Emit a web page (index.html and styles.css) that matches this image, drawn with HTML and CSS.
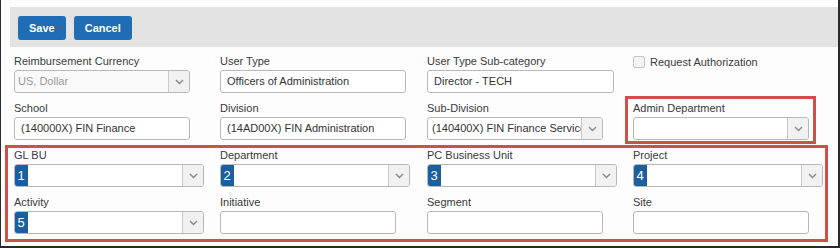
FILE: index.html
```html
<!DOCTYPE html>
<html>
<head>
<meta charset="utf-8">
<link rel="stylesheet" href="styles.css">
</head>
<body>
<div class="frame">
  <div class="toolbar">
    <button class="btn">Save</button>
    <button class="btn">Cancel</button>
  </div>
  <div class="form">
    <div class="grid">
      <div class="field">
        <label class="lbl">Reimbursement Currency</label>
        <div class="select disabled w176"><span class="val">US, Dollar</span><span class="arrow"><svg width="9" height="6" viewBox="0 0 9 6"><polyline points="1,1 4.5,4.5 8,1" fill="none" stroke="#888" stroke-width="1.4"/></svg></span></div>
      </div>
      <div class="field">
        <label class="lbl">User Type</label>
        <div class="input w186">Officers of Administration</div>
      </div>
      <div class="field">
        <label class="lbl">User Type Sub-category</label>
        <div class="input w187">Director - TECH</div>
      </div>
      <div class="field check">
        <span class="box"></span><span class="clbl">Request Authorization</span>
      </div>

      <div class="field">
        <label class="lbl">School</label>
        <div class="input w176">(140000X) FIN Finance</div>
      </div>
      <div class="field">
        <label class="lbl">Division</label>
        <div class="input w186">(14AD00X) FIN Administration</div>
      </div>
      <div class="field">
        <label class="lbl">Sub-Division</label>
        <div class="select w176"><span class="val clip">(140400X) FIN Finance Services</span><span class="arrow"><svg width="9" height="6" viewBox="0 0 9 6"><polyline points="1,1 4.5,4.5 8,1" fill="none" stroke="#888" stroke-width="1.4"/></svg></span></div>
      </div>
      <div class="field">
        <label class="lbl">Admin Department</label>
        <div class="select w176"><span class="val"></span><span class="arrow"><svg width="9" height="6" viewBox="0 0 9 6"><polyline points="1,1 4.5,4.5 8,1" fill="none" stroke="#888" stroke-width="1.4"/></svg></span></div>
      </div>

      <div class="field">
        <label class="lbl">GL BU</label>
        <div class="select w190"><span class="badge">1</span><span class="val"></span><span class="arrow"><svg width="9" height="6" viewBox="0 0 9 6"><polyline points="1,1 4.5,4.5 8,1" fill="none" stroke="#888" stroke-width="1.4"/></svg></span></div>
      </div>
      <div class="field">
        <label class="lbl">Department</label>
        <div class="select w190"><span class="badge">2</span><span class="val"></span><span class="arrow"><svg width="9" height="6" viewBox="0 0 9 6"><polyline points="1,1 4.5,4.5 8,1" fill="none" stroke="#888" stroke-width="1.4"/></svg></span></div>
      </div>
      <div class="field">
        <label class="lbl">PC Business Unit</label>
        <div class="select w190"><span class="badge">3</span><span class="val"></span><span class="arrow"><svg width="9" height="6" viewBox="0 0 9 6"><polyline points="1,1 4.5,4.5 8,1" fill="none" stroke="#888" stroke-width="1.4"/></svg></span></div>
      </div>
      <div class="field">
        <label class="lbl">Project</label>
        <div class="select w190"><span class="badge">4</span><span class="val"></span><span class="arrow"><svg width="9" height="6" viewBox="0 0 9 6"><polyline points="1,1 4.5,4.5 8,1" fill="none" stroke="#888" stroke-width="1.4"/></svg></span></div>
      </div>

      <div class="field">
        <label class="lbl">Activity</label>
        <div class="select w190"><span class="badge">5</span><span class="val"></span><span class="arrow"><svg width="9" height="6" viewBox="0 0 9 6"><polyline points="1,1 4.5,4.5 8,1" fill="none" stroke="#888" stroke-width="1.4"/></svg></span></div>
      </div>
      <div class="field">
        <label class="lbl">Initiative</label>
        <div class="input w176"></div>
      </div>
      <div class="field">
        <label class="lbl">Segment</label>
        <div class="input w176"></div>
      </div>
      <div class="field">
        <label class="lbl">Site</label>
        <div class="input w176"></div>
      </div>
    </div>
    <div class="hl hl-admin"></div>
    <div class="hl hl-segs"></div>
  </div>
</div>
</body>
</html>
```

FILE: styles.css
```css
* { box-sizing: border-box; }
html, body { margin: 0; padding: 0; }
body {
  width: 840px;
  height: 248px;
  overflow: hidden;
  font-family: "Liberation Sans", Arial, sans-serif;
  font-size: 11px;
  color: #333;
  background: #fff;
}
.frame {
  width: 840px;
  height: 248px;
  border-left: 1px solid #2a2a2a;
  border-right: 2px solid #2a2a2a;
  border-bottom: 2px solid #2a2a2a;
  background: #fdfdfd;
  padding-top: 7px;
}
.toolbar {
  margin-left: 9px;
  height: 40px;
  background: #e3e3e3;
  display: flex;
  align-items: flex-start;
  gap: 8px;
  padding: 9px 0 0 8px;
}
.btn {
  height: 24px;
  border: 0;
  border-radius: 3px;
  background: #1f6db4;
  color: #fff;
  font-family: "Liberation Sans", Arial, sans-serif;
  font-weight: bold;
  font-size: 11px;
  padding: 0 11px;
  margin: 0;
}
.btn + .btn { padding: 0 11px; }
.form {
  position: relative;
  padding: 8px 0 0 13px;
}
.grid {
  display: grid;
  grid-template-columns: 206px 207px 206px 1fr;
  grid-auto-rows: 38px;
  row-gap: 9px;
}
.field { display: flex; flex-direction: column; }
.lbl {
  display: block;
  height: 15px;
  line-height: 13px;
  color: #3a3a3a;
  font-size: 11px;
}
.input, .select {
  height: 23px;
  border: 1px solid #b8b8b8;
  border-radius: 3px;
  background: #fff;
  font-size: 11px;
  color: #333;
  line-height: 21px;
}
.input { padding-left: 6px; }
.w176 { width: 176px; }
.w186 { width: 186px; }
.w187 { width: 187px; }
.w190 { width: 190px; }
.select {
  display: flex;
  overflow: hidden;
}
.select .val {
  flex: 1;
  padding-left: 4px;
  white-space: nowrap;
  overflow: hidden;
}
.select.disabled { background: #f9f9f9; }
.select.disabled .val { color: #9a9a9a; padding-left: 3px; }
.arrow {
  width: 21px;
  flex: none;
  border-left: 1px solid #c8c8c8;
  background: #f1f1f1;
  display: flex;
  align-items: center;
  justify-content: center;
}
.badge {
  width: 14px;
  flex: none;
  background: #1b5f9e;
  color: #fff;
  font-size: 13px;
  text-align: center;
  line-height: 21px;
  margin: 0 0 0 -1px;
}
.check {
  flex-direction: row;
  align-items: flex-start;
  padding-top: 1px;
}
.box {
  width: 12px;
  height: 12px;
  border: 1px solid #c4c4c4;
  border-radius: 2px;
  background: #f4f4f4;
  margin-right: 5px;
}
.clbl { line-height: 12px; color: #3a3a3a; }
.hl {
  position: absolute;
  border: 3px solid #cf5049;
  pointer-events: none;
}
.hl-admin { left: 624px; top: 49px; width: 191px; height: 48px; }
.hl-segs { left: 4px; top: 98px; width: 823px; height: 97px; }
```
